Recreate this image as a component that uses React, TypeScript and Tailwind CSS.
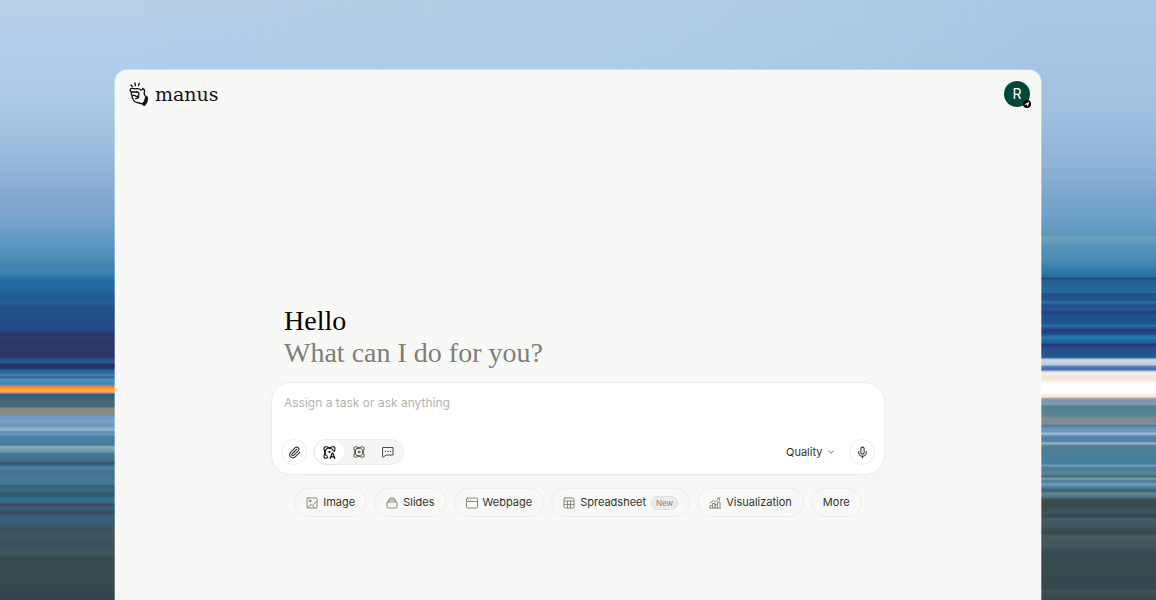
import { useState } from "react";
import type { ReactNode } from "react";
import { ChevronDown, Mic, Paperclip } from "lucide-react";

type Stop = [number, string];

// Positions are in thousandths of the scene height
const leftStops: Stop[] = [
  [0, "#bbcfe8"], [60, "#b5cfee"], [140, "#b0ccea"], [200, "#a6c5e2"], [260, "#98bbdc"],
  [333, "#83a8ce"], [355, "#7ba7cb"], [383, "#6a9fc6"], [417, "#5595bd"], [434, "#4a8bb4"],
  [439, "#4283ad"], [452, "#3f86b4"], [463, "#2c74a6"], [470, "#1f68a0"], [483, "#24699a"],
  [494, "#205896"], [504, "#24619b"], [511, "#224f8a"], [539, "#214a83"], [547, "#27488a"],
  [555, "#253c72"], [558, "#2d3258"], [562, "#2a3c70"], [572, "#2d3562"], [578, "#2b3967"],
  [594, "#2b3462"], [600, "#24538d"], [604, "#2d5b96"], [607, "#22306a"], [614, "#243568"],
  [617, "#1d6aa5"], [622, "#2a6a9e"], [625, "#5a7ba9"], [629, "#35658f"], [632, "#4596bf"],
  [640, "#2f8ab8"], [642, "#8a8a8c"], [644, "#e0804a"], [647, "#ff8f2e"], [650, "#ffad3f"],
  [653, "#ffa64a"], [655, "#c98b60"], [657, "#355f88"], [661, "#2e6183"], [669, "#4c6b6b"],
  [673, "#456671"], [678, "#3f6790"], [680, "#8c8872"], [690, "#8d8b76"], [692, "#6b94bd"],
  [703, "#7ea3c7"], [708, "#6896bb"], [717, "#93b4d2"], [720, "#5788b0"], [723, "#7097b8"],
  [728, "#4c809f"], [742, "#437b9f"], [744, "#86a9b8"], [753, "#6d98a4"], [756, "#44799f"],
  [769, "#3f6d88"], [772, "#344f63"], [776, "#3d6d8c"], [779, "#4682a9"], [786, "#43748e"],
  [806, "#47799a"], [810, "#3a6076"], [817, "#396a84"], [825, "#30556a"], [831, "#36708f"],
  [838, "#36698a"], [840, "#454851"], [843, "#384f64"], [846, "#366581"], [854, "#394b5c"],
  [861, "#385f7c"], [878, "#3a5a6e"], [881, "#3c5058"], [894, "#41575f"], [908, "#3a4f58"],
  [922, "#43575a"], [929, "#364a4c"], [972, "#374a4c"], [1000, "#32444a"],
];

const rightStops: Stop[] = [
  [0, "#a8c8e5"], [100, "#a5c6e2"], [180, "#a0c1e0"], [250, "#94b6d9"], [300, "#86afd2"],
  [333, "#78a4ca"], [358, "#6fa2c9"], [378, "#649cc1"], [393, "#6097bc"], [395, "#6fa3bd"],
  [411, "#5592b8"], [431, "#4c8db6"], [444, "#3a82af"], [461, "#236fa0"], [464, "#1d4b84"],
  [468, "#236096"], [487, "#256a98"], [490, "#1f4f8b"], [500, "#255390"], [504, "#2a71a4"],
  [508, "#225390"], [517, "#235490"], [520, "#26417a"], [526, "#22508d"], [538, "#205391"],
  [543, "#2272a5"], [546, "#215591"], [552, "#263b78"], [556, "#224887"], [562, "#207bab"],
  [571, "#205e99"], [574, "#273a73"], [577, "#2a3d75"], [581, "#21508e"], [594, "#24568d"],
  [597, "#2880ac"], [598, "#a6bfd0"], [600, "#d3d9e5"], [608, "#bccbe0"], [611, "#4f7fbf"],
  [616, "#456faf"], [619, "#c8cbd6"], [622, "#f8f4f0"], [628, "#f0e3d4"], [634, "#f7ecdf"],
  [640, "#fdfdfd"], [654, "#fefefe"], [658, "#fbf0df"], [662, "#f4dfc8"], [664, "#a7a29d"],
  [667, "#8596ae"], [674, "#7d9ab3"], [677, "#51828a"], [686, "#568395"], [692, "#5a8596"],
  [697, "#7c8c92"], [707, "#7f8e92"], [709, "#4c80a3"], [716, "#7199bd"], [719, "#6594bb"],
  [723, "#a7c0dc"], [727, "#5a86aa"], [735, "#5080a0"], [739, "#9bb3cd"], [743, "#527d93"],
  [757, "#4c7f9c"], [772, "#417fa2"], [776, "#6e9cba"], [780, "#467a97"], [789, "#5f8593"],
  [794, "#3e6b80"], [798, "#7e9ca6"], [802, "#4a7a94"], [807, "#71a0bf"], [813, "#4a7b98"],
  [817, "#385c6d"], [823, "#668791"], [829, "#48707f"], [833, "#3a4d50"], [842, "#38494a"],
  [855, "#3f5457"], [860, "#34474d"], [865, "#445b68"], [878, "#3f535c"], [888, "#38484e"],
  [893, "#475a5a"], [911, "#42545d"], [920, "#364850"], [945, "#374b4b"], [962, "#35484b"],
  [980, "#364750"], [985, "#41504f"], [1000, "#35454d"],
];

function Gradient({ id, stops }: { id: string; stops: Stop[] }) {
  return (
    <linearGradient id={id} x1="0" y1="0" x2="0" y2="1">
      {stops.map(([at, color]) => (
        <stop key={at} offset={at / 1000} stopColor={color} />
      ))}
    </linearGradient>
  );
}

function Horizon() {
  return (
    <svg
      className="absolute inset-0 h-full w-full"
      viewBox="0 0 100 100"
      preserveAspectRatio="none"
      aria-hidden="true"
    >
      <defs>
        <Gradient id="sea-left" stops={leftStops} />
        <Gradient id="sea-right" stops={rightStops} />
        <linearGradient id="fade">
          <stop offset="0.12" stopColor="#000" />
          <stop offset="0.88" stopColor="#fff" />
        </linearGradient>
        <radialGradient id="haze" cx="0.5" cy="0.04" r="0.4">
          <stop offset="0" stopColor="#b4d0e6" stopOpacity="0.7" />
          <stop offset="1" stopColor="#b4d0e6" stopOpacity="0" />
        </radialGradient>
        <mask id="right-side">
          <rect width="100" height="100" fill="url(#fade)" />
        </mask>
      </defs>
      <rect width="100" height="100" fill="url(#sea-left)" />
      <rect width="100" height="100" fill="url(#sea-right)" mask="url(#right-side)" />
      <rect width="100" height="100" fill="url(#haze)" />
    </svg>
  );
}

function Hand() {
  return (
    <svg
      className="h-6 w-5"
      viewBox="0 0 60 72"
      fill="none"
      stroke="#111"
      strokeWidth="4"
      strokeLinecap="round"
      strokeLinejoin="round"
      aria-hidden="true"
    >
      <path d="M6 9l4 5M18 3l1 8M31 4l-3 7" />
      <path d="M23 30H10c-8 0-9-11-1-11 6 0 9 3 14 1 6-1 10 1 13 4 3 1 4-2 6-5 5 2 5 7 4 12-1 5 0 8 3 11l6 4-2 14-7 10c-4-5-9-6-15-7-8-1-15-4-18-9" />
      <path d="M9 31c-4 3-3 8 2 9-3 4-2 9 2 11M11 40h7M23 30c6 0 8 5 6 10-2 4-8 5-11 1M29 42c0 5-4 8-9 8" />
      <path d="M54 46l-1 13-7 11-5-5c6-4 8-10 8-17z" fill="#111" />
    </svg>
  );
}

function Icon({ children, className = "size-3" }: { children: ReactNode; className?: string }) {
  return (
    <svg
      className={className}
      viewBox="0 0 24 24"
      fill="none"
      stroke="currentColor"
      strokeWidth="2"
      strokeLinecap="round"
      strokeLinejoin="round"
      aria-hidden="true"
    >
      {children}
    </svg>
  );
}

// Ring with a loop folded out at each corner
const orbit = (
  <>
    <path d="M12 4C9 2 5 1 3 2 1 3 2 8 4 12c-2 4-3 9-1 10s6 0 9-2c3 2 7 3 9 2s1-6-1-10c2-4 3-9 1-10s-6 0-9 2z" />
    <circle cx="12" cy="12" r="8" />
    <circle cx="12" cy="12" r="2" />
  </>
);

const modes = [
  {
    name: "Adaptive",
    icon: (
      <Icon className="size-[13px]">
        <path d="M12 4C9 2 5 1 3 2 1 3 2 8 4 12c-2 4-3 9-1 10 1 1 4 0 6-1M12 4c3-2 7-3 9-2s1 5 0 8" />
        <path d="M8 19a8 8 0 1 1 11-10" />
        <circle cx="12" cy="11" r="1" />
        <path d="M13 23l4-10h1l4 10M15 20h5" />
      </Icon>
    ),
  },
  { name: "Agent", icon: <Icon>{orbit}</Icon> },
  {
    name: "Chat",
    icon: (
      <Icon>
        <path d="M2 3h20v15H8l-5 4H2z" />
        <path d="M7 11h.01M12 11h.01M17 11h.01" strokeWidth="3" />
      </Icon>
    ),
  },
];

const suggestions = [
  {
    label: "Image",
    icon: (
      <>
        <rect x="2" y="2" width="20" height="20" rx="2" />
        <circle cx="8" cy="8" r="2" />
        <path d="M3 21l7-6 3 2 8-8M13 17l4 4" />
      </>
    ),
  },
  {
    label: "Slides",
    icon: (
      <>
        <rect x="2" y="10" width="20" height="12" rx="2" />
        <path d="M4 10l1-4h14l1 4M7 6l1-4h8l1 4" />
      </>
    ),
  },
  {
    label: "Webpage",
    icon: (
      <>
        <rect x="1" y="2" width="22" height="20" rx="2" />
        <path d="M1 9h22M5 6h.01M9 6h.01" />
      </>
    ),
  },
  {
    label: "Spreadsheet",
    badge: "New",
    icon: (
      <>
        <rect x="2" y="2" width="20" height="20" rx="2" />
        <path d="M2 8h20M2 15h20M9 8v14M15 8v14" />
      </>
    ),
  },
  {
    label: "Visualization",
    icon: (
      <>
        <path d="M2 22v-5h5v5M7 22v-9h5v9M12 22v-7h5v7M17 22V10h5v12M1 22h22" />
        <path d="M2 12l7-5 4 3 8-8M17 2h4v4" />
      </>
    ),
  },
  { label: "More" },
];

export default function App() {
  const [mode, setMode] = useState("Adaptive");
  const [task, setTask] = useState("");

  return (
    <div className="relative isolate flex min-h-screen flex-col px-[115px] pt-[70px] font-['Inter',sans-serif] text-[#34322d]">
      <Horizon />
      <div className="relative flex flex-1 flex-col rounded-t-xl bg-[#f8f8f7] ring-1 ring-white/30">
        <header className="flex items-center justify-between px-[11px] pt-[11px]">
          <a href="#" className="flex items-center gap-[6px] pl-[3px] text-[#111]">
            <Hand />
            <span className="font-['DejaVu_Serif',serif] text-[19px] leading-6">manus</span>
          </a>
          <button
            type="button"
            aria-label="Account"
            className="relative size-[26px] rounded-full bg-[#00493a] text-sm text-white"
          >
            R
            <span className="absolute -right-px -bottom-px flex size-2 items-center justify-center rounded-full bg-black">
              <Icon className="size-[6px]">
                <path d="M4 14L20 4l-5 16-4-7z" fill="#fff" stroke="#fff" />
              </Icon>
            </span>
          </button>
        </header>

        <main className="mx-auto mt-[198px] w-full max-w-[614px] pb-8">
          <h1 className="px-[13px] font-['Liberation_Serif',serif] text-[28px] leading-8 text-black">
            Hello
            <span className="block text-[#7f7e7b]">What can I do for you?</span>
          </h1>

          <form
            className="mt-[13px] rounded-[20px] border border-[#ebebea] bg-white px-[9px] pt-[11px] pb-[9px] shadow-[0_8px_24px_rgba(0,0,0,0.02)]"
            onSubmit={(e) => e.preventDefault()}
          >
            <textarea
              aria-label="Task"
              placeholder="Assign a task or ask anything"
              value={task}
              onChange={(e) => setTask(e.target.value)}
              className="block h-[45px] w-full resize-none px-[3px] text-xs leading-[18px] outline-none placeholder:text-[#b4b3b1]"
            />
            <div className="flex items-center">
              <button
                type="button"
                aria-label="Attach a file"
                className="flex size-[26px] items-center justify-center rounded-full border border-[#efefef]"
              >
                <Paperclip className="size-[13px]" />
              </button>
              <div className="ml-[6px] flex h-[26px] rounded-full border border-[#ececeb] bg-[#f5f5f4] px-px">
                {modes.map(({ name, icon }) => (
                  <button
                    key={name}
                    type="button"
                    aria-label={name}
                    aria-pressed={mode === name}
                    onClick={() => setMode(name)}
                    className={`flex w-[29px] items-center justify-center rounded-full ${
                      mode === name ? "bg-white text-black shadow-xs" : "text-[#4a4946]"
                    }`}
                  >
                    {icon}
                  </button>
                ))}
              </div>
              <div className="relative ml-auto flex items-center">
                <select
                  aria-label="Model quality"
                  className="appearance-none bg-transparent pr-[13px] text-[11px] outline-none"
                >
                  <option>Quality</option>
                  <option>Speed</option>
                </select>
                <ChevronDown className="pointer-events-none absolute right-0 size-[10px] text-[#5e5d59]" />
              </div>
              <button
                type="button"
                aria-label="Voice input"
                className="ml-[13px] flex size-[26px] items-center justify-center rounded-full border border-[#efefef]"
              >
                <Mic className="size-[13px]" />
              </button>
            </div>
          </form>

          <div className="mt-[13px] flex flex-wrap justify-center gap-[7px]">
            {suggestions.map(({ label, icon, badge }) => (
              <button
                key={label}
                type="button"
                className="flex h-[29px] items-center gap-[5px] rounded-full border border-[#ececeb] px-[11px] text-[11px]"
              >
                {icon && (
                  <span className="text-[#8a8986]">
                    <Icon>{icon}</Icon>
                  </span>
                )}
                {label}
                {badge && (
                  <span className="rounded-full border border-[#dfdfdd] bg-[#ececeb] px-1 text-[8px] leading-3 text-[#858481]">
                    {badge}
                  </span>
                )}
              </button>
            ))}
          </div>
        </main>
      </div>
    </div>
  );
}
